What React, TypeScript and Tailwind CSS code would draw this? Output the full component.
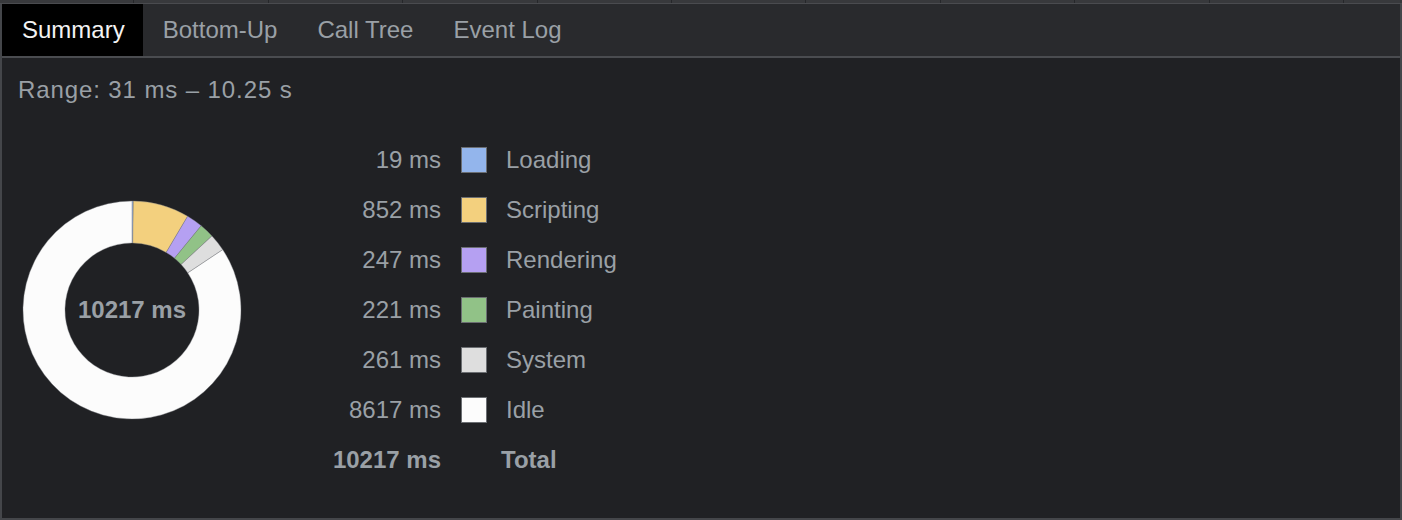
import React from "react";

const rows = [
  { value: 19, label: "Loading", color: "#93b5ec" },
  { value: 852, label: "Scripting", color: "#f3d07e" },
  { value: 247, label: "Rendering", color: "#b5a0f2" },
  { value: 221, label: "Painting", color: "#91c287" },
  { value: 261, label: "System", color: "#dedede" },
  { value: 8617, label: "Idle", color: "#fcfcfc" },
];

const total = rows.reduce((s, r) => s + r.value, 0);

const pt = (deg: number, r: number) => {
  const a = (deg * Math.PI) / 180;
  return [110 + r * Math.sin(a), 110 - r * Math.cos(a)];
};

const arc = (a0: number, a1: number) => {
  const R = 109;
  const r = 67;
  const large = a1 - a0 > 180 ? 1 : 0;
  const [x0, y0] = pt(a0, R);
  const [x1, y1] = pt(a1, R);
  const [x2, y2] = pt(a1, r);
  const [x3, y3] = pt(a0, r);
  return `M${x0} ${y0} A${R} ${R} 0 ${large} 1 ${x1} ${y1} L${x2} ${y2} A${r} ${r} 0 ${large} 0 ${x3} ${y3} Z`;
};

function Donut() {
  let acc = 0;
  return (
    <div className="relative w-[220px] h-[220px] shrink-0">
      <svg width="220" height="220" viewBox="0 0 220 220">
        {rows.map((r) => {
          const a0 = (acc / total) * 360;
          acc += r.value;
          const a1 = Math.min((acc / total) * 360, 359.99);
          return (
            <path key={r.label} d={arc(a0, a1)} fill={r.color} stroke="#7d8186" strokeWidth="0.4" />
          );
        })}
      </svg>
      <div className="absolute inset-0 flex items-center justify-center text-[24px] font-bold text-[#9aa0a6]">
        10217 ms
      </div>
    </div>
  );
}

const tabs = ["Summary", "Bottom-Up", "Call Tree", "Event Log"];

export default function App() {
  return (
    <div
      className="w-[1402px] h-[520px] bg-[#202124] flex flex-col overflow-hidden"
      style={{ fontFamily: '"Liberation Sans", Arial, sans-serif' }}
    >
      <div className="h-[4px] bg-[#38393c] border-b border-[#4a4b4f] flex shrink-0">
        {Array.from({ length: 11 }).map((_, i) => (
          <div key={i} className="w-[134.4px] h-full border-r border-[#26272a] shrink-0" />
        ))}
      </div>
      <div className="flex-1 flex flex-col border-l-2 border-r-2 border-b-2 border-[#44464a]">
        <div className="h-[54px] bg-[#292a2d] border-b-2 border-[#4a4c50] flex items-stretch shrink-0">
          {tabs.map((t, i) => (
            <div
              key={t}
              className={
                i === 0
                  ? "pl-5 pr-[18px] flex items-center text-[24px] bg-black text-[#f3f3f3]"
                  : "px-5 flex items-center text-[24px] text-[#9aa0a6]"
              }
            >
              {t}
            </div>
          ))}
        </div>
        <div className="flex-1 pl-4 pt-[18px]">
          <div className="text-[24px] leading-[28px] text-[#9aa0a6] tracking-[0.9px]">Range: 31 ms – 10.25 s</div>
          <div className="flex items-center mt-[31px]">
            <div className="ml-[4px]">
              <Donut />
            </div>
            <div className="ml-[79px] flex flex-col text-[24px] text-[#9aa0a6]">
              {rows.map((r) => (
                <div key={r.label} className="h-[50px] flex items-center">
                  <div className="w-[120px] text-right">{r.value} ms</div>
                  <div
                    className="ml-[20px] w-[26px] h-[26px] border border-[#6b6e72]"
                    style={{ backgroundColor: r.color }}
                  />
                  <div className="ml-[19px]">{r.label}</div>
                </div>
              ))}
              <div className="h-[50px] flex items-center font-bold">
                <div className="w-[120px] text-right">{total} ms</div>
                <div className="ml-[60px]">Total</div>
              </div>
            </div>
          </div>
        </div>
      </div>
    </div>
  );
}
